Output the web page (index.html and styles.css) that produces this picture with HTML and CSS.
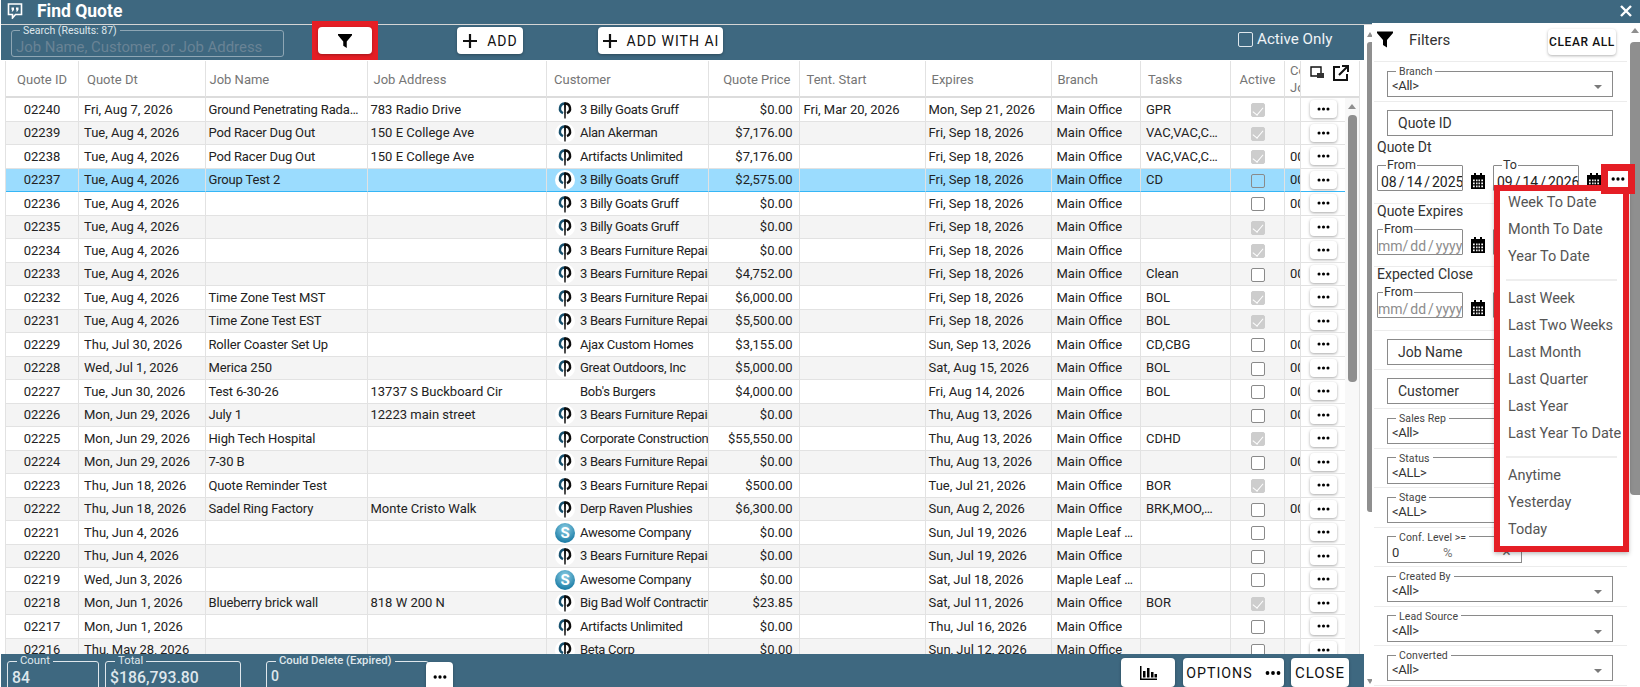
FILE: index.html
```html
<!DOCTYPE html>
<html lang="en">
  <head>
    <meta charset="utf-8">
    <title>Find Quote</title>
    <link rel="stylesheet" href="styles.css">
  </head>

  <body>

    <svg class="defs" width="0" height="0">
      <symbol id="logo" viewBox="0 0 20 20">
        <circle cx="10" cy="10" r="10" fill="#fff"/>
        <path d="M10 3.500a5 5 0 0 0-2 9.600" fill="none" stroke="#17506e" stroke-width="2.400"/>
        <path d="M10 3.500a5 5 0 0 1 2 9.600" fill="none" stroke="#0c0c0c" stroke-width="2.400"/>
        <path d="M9 2.500h2l-.3 16H9.300z" fill="#0c0c0c"/>
      </symbol>
      <symbol id="dots" viewBox="0 0 16 4">
        <circle cx="2.500" cy="2" r="1.900"/><circle cx="8" cy="2" r="1.900"/><circle cx="13.500" cy="2" r="1.900"/>
      </symbol>
      <symbol id="funnel" viewBox="0 0 16 16">
        <path d="M0 0h16v1.500L10 8.500V16l-4-2.500v-5L0 1.500z"/>
      </symbol>
      <symbol id="plus" viewBox="0 0 16 16">
        <path d="M8 1v14M1 8h14" stroke="#111" stroke-width="2.200"/>
      </symbol>
      <symbol id="cal" viewBox="0 0 14 16">
        <path fill-rule="evenodd" d="M3 0h2v2h4V0h2v2h3v14H0V2h3zM2 6.500v1.700h1.700V6.500zm3.100 0v1.700h1.400V6.500zm2.400 0v1.700h1.400V6.500zm2.800 0v1.700H12V6.500zM2 9.500v1.700h1.700V9.500zm3.100 0v1.700h1.400V9.500zm2.400 0v1.700h1.400V9.500zm2.800 0v1.700H12V9.500zM2 12.500v1.700h1.700v-1.700zm3.100 0v1.700h1.400v-1.700zm2.400 0v1.700h1.400v-1.700zm2.800 0v1.700H12v-1.700z"/>
      </symbol>
    </svg>

    <header class="titlebar">
      <svg class="titleIcon" viewBox="0 0 16 16" width="16" height="16">
        <path d="M1.500 1h13v10.500H8.500L5.500 15v-3.500h-4z" fill="none" stroke="#fff" stroke-width="1.600"/>
        <path d="M4.500 4.500H7v2.200L5.800 8.500H4.600l.7-1.800h-.8zM9 4.500h2.500v2.200l-1.200 1.800H9.100l.7-1.800H9z" fill="#fff"/>
      </svg>
      <h1>Find Quote</h1>
      <svg class="closeX" viewBox="0 0 12 12" width="12" height="12">
        <path d="M1 1l10 10M11 1L1 11" stroke="#fff" stroke-width="2.400"/>
      </svg>
    </header>

    <div class="content">

      <main class="main">

        <div class="toolbar">
          <fieldset class="searchBox">
            <legend>Search (Results: 87)</legend>
            <span>Job Name, Customer, or Job Address</span>
          </fieldset>
          <span class="redBox"><button class="btn filterBtn"><svg width="14" height="14"><use href="#funnel"/></svg></button></span>
          <button class="btn addBtn"><svg class="plus"><use href="#plus"/></svg>ADD</button>
          <button class="btn aiBtn"><svg class="plus"><use href="#plus"/></svg>ADD WITH AI</button>
          <label class="activeOnly"><span class="chkDark"></span>Active Only</label>
        </div>

        <div class="grid">
          <table class="headTable">
            <colgroup>
              <col class="cId"><col class="cDt"><col class="cJob"><col class="cAddr"><col class="cCust"><col class="cPrice"><col class="cTent"><col class="cExp"><col class="cBranch"><col class="cTasks"><col class="cActive"><col class="cClip"><col class="cHeadAct">
            </colgroup>
            <tr>
              <th class="ctr">Quote ID</th><th>Quote Dt</th><th>Job Name</th><th>Job Address</th><th>Customer</th><th class="num">Quote Price</th><th>Tent. Start</th><th>Expires</th><th>Branch</th><th>Tasks</th><th class="ctr">Active</th>
              <th class="clip">Conv<br>Job</th>
              <th class="headIcons">
                <svg width="18" height="16" viewBox="0 0 18 16"><path d="M2 2h10v9H2z" fill="none" stroke="#111" stroke-width="1.400"/><path d="M8 8h7v5H8z" fill="#333"/></svg>
                <svg width="18" height="18" viewBox="0 0 18 18"><path d="M8 3H2v13h13v-6" fill="none" stroke="#111" stroke-width="2"/><path d="M7 11l8-8M10 2h6v6" fill="none" stroke="#111" stroke-width="2"/></svg>
              </th>
            </tr>
          </table>

          <div class="gridBody">
            <table class="bodyTable">
              <colgroup>
                <col class="cId"><col class="cDt"><col class="cJob"><col class="cAddr"><col class="cCust"><col class="cPrice"><col class="cTent"><col class="cExp"><col class="cBranch"><col class="cTasks"><col class="cActive"><col class="cClip"><col class="cAct">
              </colgroup>
              <tr><td class="ctr">02240</td><td>Fri, Aug 7, 2026</td><td>Ground Penetrating Rada…</td><td>783 Radio Drive</td><td><svg class="logo"><use href="#logo"/></svg>3 Billy Goats Gruff</td><td class="num">$0.00</td><td>Fri, Mar 20, 2026</td><td>Mon, Sep 21, 2026</td><td>Main Office</td><td>GPR</td><td class="ctr"><span class="chk on"></span></td><td class="clip"></td><td class="act"><button class="more"><svg><use href="#dots"/></svg></button></td></tr>
              <tr><td class="ctr">02239</td><td>Tue, Aug 4, 2026</td><td>Pod Racer Dug Out</td><td>150 E College Ave</td><td><svg class="logo"><use href="#logo"/></svg>Alan Akerman</td><td class="num">$7,176.00</td><td></td><td>Fri, Sep 18, 2026</td><td>Main Office</td><td>VAC,VAC,C…</td><td class="ctr"><span class="chk on"></span></td><td class="clip"></td><td class="act"><button class="more"><svg><use href="#dots"/></svg></button></td></tr>
              <tr><td class="ctr">02238</td><td>Tue, Aug 4, 2026</td><td>Pod Racer Dug Out</td><td>150 E College Ave</td><td><svg class="logo"><use href="#logo"/></svg>Artifacts Unlimited</td><td class="num">$7,176.00</td><td></td><td>Fri, Sep 18, 2026</td><td>Main Office</td><td>VAC,VAC,C…</td><td class="ctr"><span class="chk on"></span></td><td class="clip">00</td><td class="act"><button class="more"><svg><use href="#dots"/></svg></button></td></tr>
              <tr class="sel"><td class="ctr">02237</td><td>Tue, Aug 4, 2026</td><td>Group Test 2</td><td></td><td><svg class="logo"><use href="#logo"/></svg>3 Billy Goats Gruff</td><td class="num">$2,575.00</td><td></td><td>Fri, Sep 18, 2026</td><td>Main Office</td><td>CD</td><td class="ctr"><span class="chk"></span></td><td class="clip">00</td><td class="act"><button class="more"><svg><use href="#dots"/></svg></button></td></tr>
              <tr><td class="ctr">02236</td><td>Tue, Aug 4, 2026</td><td></td><td></td><td><svg class="logo"><use href="#logo"/></svg>3 Billy Goats Gruff</td><td class="num">$0.00</td><td></td><td>Fri, Sep 18, 2026</td><td>Main Office</td><td></td><td class="ctr"><span class="chk"></span></td><td class="clip">00</td><td class="act"><button class="more"><svg><use href="#dots"/></svg></button></td></tr>
              <tr><td class="ctr">02235</td><td>Tue, Aug 4, 2026</td><td></td><td></td><td><svg class="logo"><use href="#logo"/></svg>3 Billy Goats Gruff</td><td class="num">$0.00</td><td></td><td>Fri, Sep 18, 2026</td><td>Main Office</td><td></td><td class="ctr"><span class="chk on"></span></td><td class="clip"></td><td class="act"><button class="more"><svg><use href="#dots"/></svg></button></td></tr>
              <tr><td class="ctr">02234</td><td>Tue, Aug 4, 2026</td><td></td><td></td><td><svg class="logo"><use href="#logo"/></svg>3 Bears Furniture Repair</td><td class="num">$0.00</td><td></td><td>Fri, Sep 18, 2026</td><td>Main Office</td><td></td><td class="ctr"><span class="chk on"></span></td><td class="clip"></td><td class="act"><button class="more"><svg><use href="#dots"/></svg></button></td></tr>
              <tr><td class="ctr">02233</td><td>Tue, Aug 4, 2026</td><td></td><td></td><td><svg class="logo"><use href="#logo"/></svg>3 Bears Furniture Repair</td><td class="num">$4,752.00</td><td></td><td>Fri, Sep 18, 2026</td><td>Main Office</td><td>Clean</td><td class="ctr"><span class="chk"></span></td><td class="clip">00</td><td class="act"><button class="more"><svg><use href="#dots"/></svg></button></td></tr>
              <tr><td class="ctr">02232</td><td>Tue, Aug 4, 2026</td><td>Time Zone Test MST</td><td></td><td><svg class="logo"><use href="#logo"/></svg>3 Bears Furniture Repair</td><td class="num">$6,000.00</td><td></td><td>Fri, Sep 18, 2026</td><td>Main Office</td><td>BOL</td><td class="ctr"><span class="chk on"></span></td><td class="clip"></td><td class="act"><button class="more"><svg><use href="#dots"/></svg></button></td></tr>
              <tr><td class="ctr">02231</td><td>Tue, Aug 4, 2026</td><td>Time Zone Test EST</td><td></td><td><svg class="logo"><use href="#logo"/></svg>3 Bears Furniture Repair</td><td class="num">$5,500.00</td><td></td><td>Fri, Sep 18, 2026</td><td>Main Office</td><td>BOL</td><td class="ctr"><span class="chk on"></span></td><td class="clip"></td><td class="act"><button class="more"><svg><use href="#dots"/></svg></button></td></tr>
              <tr><td class="ctr">02229</td><td>Thu, Jul 30, 2026</td><td>Roller Coaster Set Up</td><td></td><td><svg class="logo"><use href="#logo"/></svg>Ajax Custom Homes</td><td class="num">$3,155.00</td><td></td><td>Sun, Sep 13, 2026</td><td>Main Office</td><td>CD,CBG</td><td class="ctr"><span class="chk"></span></td><td class="clip">00</td><td class="act"><button class="more"><svg><use href="#dots"/></svg></button></td></tr>
              <tr><td class="ctr">02228</td><td>Wed, Jul 1, 2026</td><td>Merica 250</td><td></td><td><svg class="logo"><use href="#logo"/></svg>Great Outdoors, Inc</td><td class="num">$5,000.00</td><td></td><td>Sat, Aug 15, 2026</td><td>Main Office</td><td>BOL</td><td class="ctr"><span class="chk"></span></td><td class="clip">00</td><td class="act"><button class="more"><svg><use href="#dots"/></svg></button></td></tr>
              <tr><td class="ctr">02227</td><td>Tue, Jun 30, 2026</td><td>Test 6-30-26</td><td>13737 S Buckboard Cir</td><td><span class="noLogo"></span>Bob's Burgers</td><td class="num">$4,000.00</td><td></td><td>Fri, Aug 14, 2026</td><td>Main Office</td><td>BOL</td><td class="ctr"><span class="chk"></span></td><td class="clip">00</td><td class="act"><button class="more"><svg><use href="#dots"/></svg></button></td></tr>
              <tr><td class="ctr">02226</td><td>Mon, Jun 29, 2026</td><td>July 1</td><td>12223 main street</td><td><svg class="logo"><use href="#logo"/></svg>3 Bears Furniture Repair</td><td class="num">$0.00</td><td></td><td>Thu, Aug 13, 2026</td><td>Main Office</td><td></td><td class="ctr"><span class="chk"></span></td><td class="clip">00</td><td class="act"><button class="more"><svg><use href="#dots"/></svg></button></td></tr>
              <tr><td class="ctr">02225</td><td>Mon, Jun 29, 2026</td><td>High Tech Hospital</td><td></td><td><svg class="logo"><use href="#logo"/></svg>Corporate Construction</td><td class="num">$55,550.00</td><td></td><td>Thu, Aug 13, 2026</td><td>Main Office</td><td>CDHD</td><td class="ctr"><span class="chk on"></span></td><td class="clip"></td><td class="act"><button class="more"><svg><use href="#dots"/></svg></button></td></tr>
              <tr><td class="ctr">02224</td><td>Mon, Jun 29, 2026</td><td>7-30 B</td><td></td><td><svg class="logo"><use href="#logo"/></svg>3 Bears Furniture Repair</td><td class="num">$0.00</td><td></td><td>Thu, Aug 13, 2026</td><td>Main Office</td><td></td><td class="ctr"><span class="chk"></span></td><td class="clip">00</td><td class="act"><button class="more"><svg><use href="#dots"/></svg></button></td></tr>
              <tr><td class="ctr">02223</td><td>Thu, Jun 18, 2026</td><td>Quote Reminder Test</td><td></td><td><svg class="logo"><use href="#logo"/></svg>3 Bears Furniture Repair</td><td class="num">$500.00</td><td></td><td>Tue, Jul 21, 2026</td><td>Main Office</td><td>BOR</td><td class="ctr"><span class="chk on"></span></td><td class="clip"></td><td class="act"><button class="more"><svg><use href="#dots"/></svg></button></td></tr>
              <tr><td class="ctr">02222</td><td>Thu, Jun 18, 2026</td><td>Sadel Ring Factory</td><td>Monte Cristo Walk</td><td><svg class="logo"><use href="#logo"/></svg>Derp Raven Plushies</td><td class="num">$6,300.00</td><td></td><td>Sun, Aug 2, 2026</td><td>Main Office</td><td>BRK,MOO,…</td><td class="ctr"><span class="chk"></span></td><td class="clip">00</td><td class="act"><button class="more"><svg><use href="#dots"/></svg></button></td></tr>
              <tr><td class="ctr">02221</td><td>Thu, Jun 4, 2026</td><td></td><td></td><td><span class="skLogo">S</span>Awesome Company</td><td class="num">$0.00</td><td></td><td>Sun, Jul 19, 2026</td><td>Maple Leaf …</td><td></td><td class="ctr"><span class="chk"></span></td><td class="clip"></td><td class="act"><button class="more"><svg><use href="#dots"/></svg></button></td></tr>
              <tr><td class="ctr">02220</td><td>Thu, Jun 4, 2026</td><td></td><td></td><td><svg class="logo"><use href="#logo"/></svg>3 Bears Furniture Repair</td><td class="num">$0.00</td><td></td><td>Sun, Jul 19, 2026</td><td>Main Office</td><td></td><td class="ctr"><span class="chk"></span></td><td class="clip"></td><td class="act"><button class="more"><svg><use href="#dots"/></svg></button></td></tr>
              <tr><td class="ctr">02219</td><td>Wed, Jun 3, 2026</td><td></td><td></td><td><span class="skLogo">S</span>Awesome Company</td><td class="num">$0.00</td><td></td><td>Sat, Jul 18, 2026</td><td>Maple Leaf …</td><td></td><td class="ctr"><span class="chk"></span></td><td class="clip"></td><td class="act"><button class="more"><svg><use href="#dots"/></svg></button></td></tr>
              <tr><td class="ctr">02218</td><td>Mon, Jun 1, 2026</td><td>Blueberry brick wall</td><td>818 W 200 N</td><td><svg class="logo"><use href="#logo"/></svg>Big Bad Wolf Contracting</td><td class="num">$23.85</td><td></td><td>Sat, Jul 11, 2026</td><td>Main Office</td><td>BOR</td><td class="ctr"><span class="chk on"></span></td><td class="clip"></td><td class="act"><button class="more"><svg><use href="#dots"/></svg></button></td></tr>
              <tr><td class="ctr">02217</td><td>Mon, Jun 1, 2026</td><td></td><td></td><td><svg class="logo"><use href="#logo"/></svg>Artifacts Unlimited</td><td class="num">$0.00</td><td></td><td>Thu, Jul 16, 2026</td><td>Main Office</td><td></td><td class="ctr"><span class="chk"></span></td><td class="clip"></td><td class="act"><button class="more"><svg><use href="#dots"/></svg></button></td></tr>
              <tr><td class="ctr">02216</td><td>Thu, May 28, 2026</td><td></td><td></td><td><svg class="logo"><use href="#logo"/></svg>Beta Corp</td><td class="num">$0.00</td><td></td><td>Sun, Jul 12, 2026</td><td>Main Office</td><td></td><td class="ctr"><span class="chk"></span></td><td class="clip"></td><td class="act"><button class="more"><svg><use href="#dots"/></svg></button></td></tr>
            </table>
            <div class="vbar gridBar"><span class="arrowUp"></span><span class="thumb"></span></div>
          </div>
        </div>

        <footer class="footer">
          <fieldset class="stat statCount"><legend>Count</legend><b>84</b></fieldset>
          <fieldset class="stat statTotal"><legend>Total</legend><b>$186,793.80</b></fieldset>
          <fieldset class="stat statDelete"><legend>Could Delete (Expired)</legend>0</fieldset>
          <button class="btn footDots"><svg width="14" height="4"><use href="#dots"/></svg></button>
          <button class="btn chartBtn">
            <svg width="17" height="14" viewBox="0 0 17 14"><path d="M0 0h1.500v12.500H17V14H0zM3 5h2.500v6.500H3zM7 2h2.500v9.500H7zM11 6h2.500v5.500H11zM14.500 8H17v3.500h-2.500z"/></svg>
          </button>
          <button class="btn optBtn">OPTIONS<svg width="16" height="4"><use href="#dots"/></svg></button>
          <button class="btn closeBtn">CLOSE</button>
        </footer>

      </main>

      <div class="vbar outerBar"><span class="arrowUp"></span><span class="thumb"></span><span class="arrowDown"></span></div>

      <aside class="filters">
        <div class="filterBody">

          <div class="fRow fHead">
            <svg class="headFunnel" width="16" height="17"><use href="#funnel"/></svg>
            <span class="fTitle">Filters</span>
            <button class="btn clearBtn">CLEAR ALL</button>
          </div>

          <div class="fRow selRow firstSel">
            <fieldset class="selBox"><legend>Branch</legend>&lt;All&gt;<i class="caret"></i></fieldset>
          </div>

          <div class="fRow dateRow quoteBlock">
            <div class="textBox">Quote ID</div>
            <div class="dateLabel">Quote Dt</div>
            <div class="dates">
              <fieldset class="dateBox"><legend>From</legend>08 / 14 / 2025</fieldset>
              <svg class="calIcon"><use href="#cal"/></svg>
              <fieldset class="dateBox"><legend>To</legend>09 / 14 / 2026</fieldset>
              <svg class="calIcon"><use href="#cal"/></svg>
              <button class="btn pickBtn"><svg width="14" height="4"><use href="#dots"/></svg></button>
            </div>
          </div>

          <div class="fRow dateRow">
            <div class="dateLabel short">Quote Expires</div>
            <div class="dates">
              <fieldset class="dateBox empty"><legend>From</legend>mm/ dd / yyyy</fieldset>
              <svg class="calIcon"><use href="#cal"/></svg>
              <fieldset class="dateBox empty"><legend>To</legend>mm/ dd / yyyy</fieldset>
            </div>
          </div>

          <div class="fRow dateRow lastDate">
            <div class="dateLabel short">Expected Close</div>
            <div class="dates">
              <fieldset class="dateBox empty"><legend>From</legend>mm/ dd / yyyy</fieldset>
              <svg class="calIcon"><use href="#cal"/></svg>
              <fieldset class="dateBox empty"><legend>To</legend>mm/ dd / yyyy</fieldset>
            </div>
          </div>

          <div class="fRow inputRow"><div class="textBox">Job Name</div></div>
          <div class="fRow inputRow"><div class="textBox">Customer</div></div>

          <div class="fRow selRow"><fieldset class="selBox"><legend>Sales Rep</legend>&lt;All&gt;<i class="caret"></i></fieldset></div>
          <div class="fRow selRow"><fieldset class="selBox"><legend>Status</legend>&lt;ALL&gt;<i class="caret"></i></fieldset></div>
          <div class="fRow selRow"><fieldset class="selBox"><legend>Stage</legend>&lt;ALL&gt;<i class="caret"></i></fieldset></div>
          <div class="fRow selRow"><fieldset class="selBox confBox"><legend>Conf. Level &gt;=</legend><span class="confVal">0</span><span class="confPct">%</span><span class="confX">×</span></fieldset></div>
          <div class="fRow selRow"><fieldset class="selBox"><legend>Created By</legend>&lt;All&gt;<i class="caret"></i></fieldset></div>
          <div class="fRow selRow"><fieldset class="selBox"><legend>Lead Source</legend>&lt;All&gt;<i class="caret"></i></fieldset></div>
          <div class="fRow selRow"><fieldset class="selBox"><legend>Converted</legend>&lt;All&gt;<i class="caret"></i></fieldset></div>

        </div>

        <div class="vbar panelBar"><span class="arrowUp"></span><span class="thumb"></span></div>

        <ul class="dateMenu">
          <li>Week To Date</li>
          <li>Month To Date</li>
          <li>Year To Date</li>
          <li class="menuLine"></li>
          <li>Last Week</li>
          <li>Last Two Weeks</li>
          <li>Last Month</li>
          <li>Last Quarter</li>
          <li>Last Year</li>
          <li>Last Year To Date</li>
          <li class="menuLine"></li>
          <li>Anytime</li>
          <li>Yesterday</li>
          <li>Today</li>
        </ul>
      </aside>

    </div>

  </body>
</html>
```

FILE: styles.css
```css
*{
  box-sizing: border-box;
}

html, body{
  height: 687px;
  overflow: hidden;
}

body{
  margin: 0;
  padding-left: 1px;
  background: #fff;
  font-family: Roboto, sans-serif;
  font-size: 13px;
  color: #222;
  display: flex;
  flex-direction: column;
}

.defs{
  position: absolute;
}

button{
  font-family: inherit;
  border: none;
  padding: 0;
}

fieldset{
  margin: 0;
  min-width: 0;
}

legend{
  line-height: 12px;
  font-size: 11px;
  padding: 0 3px;
}

/* title bar */
.titlebar{
  height: 25px;
  flex: none;
  background: #3e6880;
  border-bottom: 1px solid #d5d5d5;
  display: flex;
  align-items: center;
  padding: 0 8px 2px 6px;
  color: #fff;
}

.titlebar h1{
  margin: 0 0 0 14px;
  font-size: 17.500px;
  font-weight: 700;
}

.closeX{
  margin-left: auto;
}

.content{
  flex: 1;
  display: flex;
  min-height: 0;
}

.main{
  width: 1363px;
  flex: none;
  display: flex;
  flex-direction: column;
  min-height: 0;
}

/* toolbar */
.toolbar{
  height: 35px;
  flex: none;
  background: #3e6880;
  display: flex;
  align-items: flex-start;
  padding-left: 10px;
  color: #fff;
}

.searchBox{
  width: 273px;
  height: 33px;
  margin-top: -1px;
  border: 1px solid #8ea6b4;
  border-radius: 3px;
  padding: 0 0 0 4px;
  font-size: 14.900px;
  color: #698395;
  line-height: 23px;
}

.searchBox legend{
  color: #dfe7ec;
  margin-left: 4px;
  font-size: 10.500px;
  position: relative;
  top: 1px;
}

.btn{
  background: #fff;
  border-radius: 4px;
  box-shadow: 0 1px 3px rgba(0, 0, 0, .3);
  color: #111;
  display: flex;
  align-items: center;
  justify-content: center;
  font-size: 14px;
  letter-spacing: 1px;
}

.redBox{
  margin: -4px 0 0 28px;
  border: 6px solid #e51e25;
  background: #e51e25;
  position: relative;
}

.filterBtn{
  width: 54px;
  height: 27px;
}

.addBtn{
  width: 66px;
  height: 27px;
  margin: 2px 0 0 79px;
}

.aiBtn{
  width: 125px;
  height: 27px;
  margin: 2px 0 0 75px;
}

.plus{
  width: 16px;
  height: 16px;
  flex: none;
  margin-right: 9px;
}

.activeOnly{
  margin: 5px 0 0 515px;
  display: flex;
  align-items: center;
  font-size: 15.200px;
  color: #eef3f6;
}

.chkDark{
  width: 15px;
  height: 15px;
  border: 1px solid #dfe7ec;
  border-radius: 2px;
  margin-right: 4px;
}

/* grid */
.grid{
  flex: 1;
  min-height: 0;
  margin: 1px 0 0 4px;
  width: 1355px;
  border-left: 1px solid #e2e2e2;
  border-right: 1px solid #e2e2e2;
  overflow: hidden;
}

table{
  border-collapse: separate;
  border-spacing: 0;
  table-layout: fixed;
}

.headTable{
  width: 1353px;
}

.bodyTable{
  width: 1338px;
  flex: none;
}

.cId{ width: 73px; }
.cDt{ width: 126.500px; }
.cJob{ width: 162px; }
.cAddr{ width: 179.500px; }
.cCust{ width: 162px; }
.cPrice{ width: 90.500px; }
.cTent{ width: 126px; }
.cExp{ width: 126px; }
.cBranch{ width: 89.500px; }
.cTasks{ width: 90px; }
.cActive{ width: 54px; }
.cClip{ width: 15.500px; }
.cAct{ width: 44px; }
.cHeadAct{ width: 59px; }

th{
  height: 37px;
  border-right: 1px solid #e2e2e2;
  border-bottom: 2px solid #dcdcdc;
  font-weight: 400;
  color: #757575;
  text-align: left;
  padding: 2px 8px 0;
  white-space: nowrap;
  overflow: hidden;
}

th:nth-child(3){ padding-left: 4px; }
th:nth-child(4), th:nth-child(8), th:nth-child(9){ padding-left: 6px; }
th:nth-child(5), th:nth-child(7), th:nth-child(10){ padding-left: 7px; }

td{
  height: 23.500px;
  border-right: 1px solid #e2e2e2;
  border-bottom: 1px solid #e2e2e2;
  padding: 0 5px;
  white-space: nowrap;
  overflow: hidden;
}

td:nth-child(3), td:nth-child(4), td:nth-child(8){ padding-left: 3px; }
td:nth-child(7){ padding-left: 4px; }
td:nth-child(3){ letter-spacing: -.15px; }
td:nth-child(5){ letter-spacing: -.3px; }

th.clip, td.clip{
  padding: 0 0 0 5px;
}

th.clip{
  line-height: 17px;
}

.ctr{
  text-align: center;
}

th.ctr{
  padding: 2px 0 0;
}

.num, th.num{
  text-align: right;
}

td.num{
  padding-right: 6px;
}

th.headIcons{
  border-right: none;
  padding: 0 0 12px 8px;
}

.headIcons svg{
  margin-right: 2px;
  vertical-align: middle;
}

.gridBody{
  display: flex;
  align-items: stretch;
}

.bodyTable tr:nth-child(even) td{
  background: #f4f4f4;
}

.bodyTable tr.sel td{
  background: #9bdcfe;
  border-bottom-color: #35b6f6;
}

.bodyTable tr td.act{
  background: #fff;
  border-right: none;
  padding: 0 0 0 9px;
}

.bodyTable tr.sel td.act{
  background: #fff;
}

.more{
  width: 27px;
  height: 18px;
  background: #fff;
  border-radius: 4px;
  box-shadow: 0 1px 3px rgba(0, 0, 0, .35);
  display: flex;
  align-items: center;
  justify-content: center;
}

.more svg{
  width: 13px;
  height: 4px;
}

.chk{
  display: inline-block;
  width: 14px;
  height: 14px;
  vertical-align: middle;
  border: 1px solid #8a8a8a;
  border-radius: 2px;
  background: #fff;
  position: relative;
}

.sel .chk{
  background: transparent;
}

.chk.on{
  background: #cdcdcd;
  border-color: #cdcdcd;
}

.chk.on::after{
  content: "";
  position: absolute;
  left: 3.500px;
  top: 0.500px;
  width: 5px;
  height: 9px;
  border: solid #fff;
  border-width: 0 1.500px 1.500px 0;
  transform: rotate(40deg);
}

.logo, .noLogo, .skLogo{
  display: inline-block;
  width: 20px;
  height: 20px;
  vertical-align: -3px;
  margin: -3px 5px -3px 3px;
}

.skLogo{
  overflow: hidden;
  border-radius: 50%;
  background: radial-gradient(circle at 50% 30%, #8fd0e6, #1f7fa8 75%);
  color: #fff;
  font-weight: 700;
  font-size: 15px;
  line-height: 20px;
  letter-spacing: 0;
  text-align: center;
}

/* fake scrollbars */
.vbar{
  position: relative;
  flex: none;
}

.thumb{
  display: block;
  background: #8f8f8f;
  border-radius: 4px;
}

.arrowUp{
  display: block;
  margin: 0 auto;
  width: 0;
  border: 4px solid transparent;
  border-top: none;
  border-bottom: 5px solid #8f8f8f;
}

.arrowDown{
  position: absolute;
  bottom: 3px;
  left: 0;
  width: 0;
  border: 3px solid transparent;
  border-bottom: none;
  border-top: 5px solid #8f8f8f;
}

.gridBar{
  width: 15px;
  background: #f8f8f8;
  padding-top: 6px;
}

.gridBar .thumb{
  width: 9px;
  height: 267px;
  margin: 6px 0 0 3px;
}

.outerBar{
  width: 5px;
  margin-left: 3px;
  padding-top: 7px;
}

.outerBar .arrowUp{
  border-width: 3px;
  border-top: none;
  border-bottom-width: 5px;
}

.outerBar .thumb{
  height: 470px;
  margin-top: 5px;
  border-radius: 3px 0 0 3px;
}

/* footer */
.footer{
  height: 33px;
  flex: none;
  background: #3e6880;
  overflow: hidden;
  display: flex;
  align-items: flex-start;
  padding-left: 6px;
  color: #fff;
}

.stat{
  height: 40px;
  margin-top: 1px;
  border: 1px solid #dfe7ec;
  border-radius: 3px;
  padding: 1px 0 0 4px;
  color: #dfe7ec;
}

.stat legend{
  margin-left: 5px;
  font-size: 11.300px;
}

.stat b{
  font-weight: 500;
  font-size: 15.800px;
}

.statCount{ width: 92px; }
.statTotal{ width: 136px; margin-left: 6px; }
.statDelete{ width: 163px; margin-left: 25px; font-size: 14px; font-weight: 500; }

.footDots{
  width: 27px;
  height: 30px;
  margin: 8px 0 0 -3px;
}

.chartBtn{
  width: 54px;
  height: 29px;
  margin: 4px 0 0 668px;
}

.optBtn{
  width: 101px;
  height: 29px;
  margin: 4px 0 0 8px;
  font-size: 14.200px;
  gap: 12px;
}

.closeBtn{
  width: 58px;
  height: 29px;
  margin: 4px 0 0 7px;
  font-size: 15px;
}

/* filter panel */
.filters{
  width: 268px;
  flex: none;
  margin-top: -2px;
  height: 664px;
  background: #fff;
  position: relative;
  display: flex;
  overflow: hidden;
}

.filterBody{
  width: 258px;
  flex: none;
  padding: 0 3px 0 2px;
}

.panelBar{
  width: 10px;
  padding-top: 5px;
}

.panelBar .thumb{
  height: 453px;
  margin-top: 9px;
  border-radius: 4px 0 0 4px;
}

.fRow{
  border-bottom: 1px solid #ececec;
  padding-left: 13px;
  font-size: 14px;
}

.fHead{
  height: 39px;
  padding-left: 3px;
  display: flex;
  align-items: flex-start;
}

.headFunnel{
  margin-top: 8px;
}

.fTitle{
  margin: 8px 0 0 16px;
  font-size: 15px;
  color: #333;
}

.clearBtn{
  width: 68px;
  height: 26px;
  margin: 6px 11px 0 auto;
  font-size: 12px;
  font-weight: 500;
  letter-spacing: .6px;
  white-space: nowrap;
}

.selRow{
  height: 39.500px;
  padding-top: 3px;
}

.firstSel{
  height: 40px;
}

.selBox{
  position: relative;
  width: 226px;
  height: 32px;
  border: 1px solid #8a8a8a;
  padding: 0 0 0 4px;
  font-size: 13px;
  line-height: 17px;
  letter-spacing: -.3px;
  color: #333;
}

.selBox legend{
  margin-left: 4px;
  font-size: 10.500px;
  letter-spacing: .1px;
  color: #444;
  position: relative;
  top: 1px;
}

.caret{
  position: absolute;
  right: 10px;
  top: 8px;
  border: 4px solid transparent;
  border-bottom: none;
  border-top: 4px solid #7a7a7a;
}

.confBox{
  width: 135px;
}

.confPct{
  margin-left: 44px;
  color: #777;
}

.confX{
  margin-left: 50px;
  color: #666;
  font-size: 16px;
}

.textBox{
  width: 226px;
  height: 26px;
  border: 1px solid #8a8a8a;
  padding-left: 10px;
  line-height: 24px;
  font-size: 14px;
  color: #333;
}

.dateRow{
  padding-left: 3px;
  height: 63px;
}

.quoteBlock{
  height: 102px;
  padding-top: 8px;
}

.quoteBlock .textBox{
  margin-left: 10px;
}

.lastDate{
  height: 64px;
}

.dateLabel{
  height: 22px;
  line-height: 22px;
  font-size: 14px;
  color: #333;
}

.dateLabel.short{
  height: 18px;
  line-height: 15px;
}

.dates{
  display: flex;
  align-items: flex-start;
}

.dateBox{
  width: 86px;
  height: 33px;
  flex: none;
  border: 1px solid #8a8a8a;
  border-radius: 1px;
  padding: 0 0 0 3px;
  font-size: 14px;
  line-height: 20px;
  word-spacing: -1.500px;
  white-space: nowrap;
  overflow: hidden;
  color: #222;
}

.dateBox legend{
  margin-left: 5px;
  padding: 0 1px;
  font-size: 12.500px;
  line-height: 14px;
  word-spacing: 0;
  color: #333;
}

.dateBox.empty{
  color: #8d8d8d;
  padding-left: 0;
}

.calIcon{
  width: 14px;
  height: 16px;
  flex: none;
  margin: 15px 8px 0 8px;
}

.pickBtn{
  width: 20px;
  height: 16px;
  flex: none;
  margin: 13px 0 0 -1px;
  outline: 7px solid #e51e25;
  box-shadow: none;
  border-radius: 0;
  position: relative;
  z-index: 3;
}

.inputRow{
  height: 39px;
  padding-top: 8px;
}

/* quick date menu */
.dateMenu{
  position: absolute;
  left: 122px;
  top: 162px;
  width: 135px;
  height: 367px;
  margin: 0;
  padding: 0 6px;
  list-style: none;
  background: #fff;
  border: 6px solid #e51e25;
  box-shadow: 0 2px 4px rgba(0, 0, 0, .25);
  z-index: 2;
}

.dateMenu li{
  height: 27px;
  line-height: 27px;
  font-size: 14.500px;
  color: #555;
  padding-left: 2px;
  white-space: nowrap;
}

.dateMenu li:first-child{
  margin-top: -2px;
}

.dateMenu .menuLine{
  height: 2px;
  margin: 9px 0 4px;
  background: #eee;
}
```
